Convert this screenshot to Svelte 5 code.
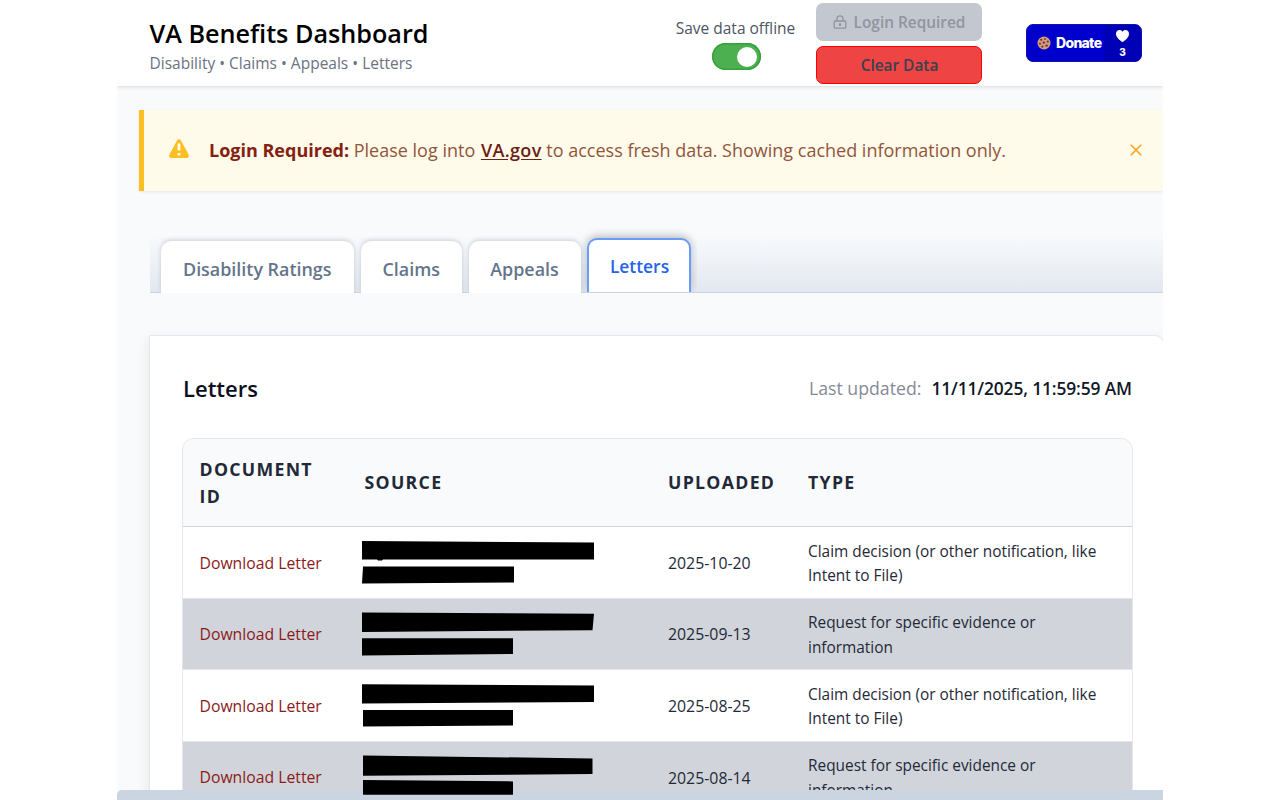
<script>
  const tabs = ["Disability Ratings", "Claims", "Appeals", "Letters"];
  let activeTab = "Letters";
  let saveOffline = true;
  let showNotice = true;

  // bars: redaction shapes covering the source text, in row coordinates
  const letters = [
    {
      uploaded: "2025-10-20",
      type: ["Claim decision (or other notification, like", "Intent to File)"],
      bars: [
        "0,14 232,15.4 232,32.5 21,32.5 20,33.6 16,33.6 15,32.5 0,32.5",
        "1,39.4 152,39.4 152,55.4 0,56.6",
      ],
    },
    {
      uploaded: "2025-09-13",
      type: ["Request for specific evidence or", "information"],
      bars: ["0,13.6 232,14.8 230.5,31.2 0,33", "0,39.2 151,39.2 151,55 0,56.4"],
    },
    {
      uploaded: "2025-08-25",
      type: ["Claim decision (or other notification, like", "Intent to File)"],
      bars: ["0,14.2 232,15.6 232,32 0,33.6", "1,40 151,40 151,55.4 1,56.6"],
    },
    {
      uploaded: "2025-08-14",
      type: ["Request for specific evidence or", "information"],
      bars: ["1,13.6 230.5,16.4 230.5,32 1,33.8", "1,38 151,39.4 151,52.8 1,52.8"],
    },
  ];
</script>

<div class="app">
  <header class="topbar">
    <div class="brand">
      <h1>VA Benefits Dashboard</h1>
      <p>Disability • Claims • Appeals • Letters</p>
    </div>
    <div class="offline">
      <span>Save data offline</span>
      <button
        class="toggle"
        class:on={saveOffline}
        aria-label="Save data offline"
        on:click={() => (saveOffline = !saveOffline)}
      ><i></i></button>
    </div>
    <div class="actions">
      <button class="btn locked" disabled>
        <svg width="14" height="15" viewBox="0 0 14 15" fill="none" stroke="currentColor" stroke-width="1.3">
          <rect x="1.2" y="6" width="11.6" height="7.2" rx="1" />
          <path d="M4 6V3.9a3 3 0 0 1 6 0V6" />
          <circle cx="7" cy="9.6" r="0.7" fill="currentColor" />
        </svg>
        <span>Login Required</span>
      </button>
      <button class="btn clear"><span>Clear Data</span></button>
    </div>
    <button class="donate">
      <span class="donate-main">
        <svg width="14" height="14" viewBox="0 0 14 14">
          <circle cx="7" cy="7" r="6.5" fill="#d99a78" />
          <g fill="#5f3340">
            <circle cx="4.2" cy="3.8" r="1.1" />
            <circle cx="8" cy="3" r="0.9" />
            <circle cx="10.8" cy="5.6" r="1.1" />
            <circle cx="6.8" cy="6.6" r="1.2" />
            <circle cx="3" cy="7.8" r="1" />
            <circle cx="5.4" cy="10.6" r="1.1" />
            <circle cx="9.6" cy="9.6" r="1.2" />
          </g>
        </svg>
        <span class="donate-label">Donate</span>
      </span>
      <span class="donate-count">
        <svg width="13" height="12" viewBox="0 0 13 12">
          <path d="M6.5 12C3.8 10.4 0 7.4 0 3.7 0 1.5 1.6 0 3.5 0c1.3 0 2.4.7 3 1.7C7.1.7 8.2 0 9.5 0 11.4 0 13 1.5 13 3.7c0 3.7-3.8 6.7-6.5 8.3z" fill="#fff" />
        </svg>
        <b>3</b>
      </span>
    </button>
  </header>

  {#if showNotice}
    <div class="notice">
      <svg class="warn" width="22" height="20" viewBox="0 0 22 20">
        <path d="M9 1.4a2.3 2.3 0 0 1 4 0l7.6 14.2a2.2 2.2 0 0 1-2 3.4H3.4a2.2 2.2 0 0 1-2-3.400z" fill="#fbbf24" />
        <path d="M9.6 4.6h2.8v7H9.6zM9.6 14h2.8v2.6H9.6z" fill="#fffbeb" />
      </svg>
      <p><strong>Login Required:</strong> Please log into <a href="#va">VA.gov</a> to access fresh data. Showing cached information only.</p>
      <button class="close" aria-label="Dismiss" on:click={() => (showNotice = false)}>
        <svg width="12" height="12" viewBox="0 0 12 12" stroke="#f9a01b" stroke-width="1.5" fill="none">
          <path d="M.8.8l10.4 10.4M11.2.8L.8 11.2" />
        </svg>
      </button>
    </div>
  {/if}

  <nav class="tabs">
    {#each tabs as tab}
      <button class="tab" class:active={activeTab === tab} on:click={() => (activeTab = tab)}>
        <span>{tab}</span>
      </button>
    {/each}
  </nav>

  <section class="card">
    <div class="card-head">
      <h2>Letters</h2>
      <div class="updated">
        <span class="updated-label">Last updated:</span>
        <span class="updated-value">11/11/2025, 11:59:59 AM</span>
      </div>
    </div>

    <div class="table">
      <div class="row head">
        <div>Document<br />ID</div>
        <div>Source</div>
        <div>Uploaded</div>
        <div>Type</div>
      </div>
      {#each letters as letter}
        <div class="row">
          <div><a class="download" href="#letter">Download Letter</a></div>
          <div class="source">
            <svg width="232" height="71" viewBox="0 0 232 71">
              {#each letter.bars as points}
                <polygon {points} />
              {/each}
            </svg>
          </div>
          <div class="date">{letter.uploaded}</div>
          <div class="type">{letter.type[0]}<br />{letter.type[1]}</div>
        </div>
      {/each}
    </div>
  </section>

  <div class="scrollbar"></div>
</div>

<style>
  :global(body) {
    background: #fff;
    overflow: hidden;
  }
  .app {
    position: relative;
    width: 1046px;
    height: 800px;
    margin-left: 117px;
    overflow: hidden;
    background: #f9fafc;
    font-family: "Open Sans", "Noto Sans", sans-serif;
    color: #1f2937;
  }
  h1,
  h2,
  p {
    margin: 0;
  }
  button {
    font-family: inherit;
    border: 0;
    padding: 0;
    cursor: pointer;
  }
  svg {
    display: block;
    flex: none;
  }
  .topbar {
    display: flex;
    height: 86px;
    background: #fff;
    border-bottom: 1px solid #e5e7eb;
    box-shadow: 0 1px 3px rgba(0, 0, 0, 0.08);
  }
  .brand {
    width: 526px;
    padding: 15px 0 0 32.5px;
    box-sizing: border-box;
    white-space: nowrap;
  }
  h1 {
    font-size: 25.2px;
    line-height: 37px;
    font-weight: 600;
    color: #000;
  }
  .brand p {
    font-size: 15.5px;
    line-height: 22px;
    color: #6b7280;
  }
  .offline {
    width: 186px;
    display: flex;
    flex-direction: column;
    align-items: center;
    padding-top: 17px;
    font-size: 15.5px;
    line-height: 22px;
    color: #4b5563;
    white-space: nowrap;
  }
  .offline span {
    margin-left: -1px;
  }
  .toggle {
    width: 49px;
    height: 27px;
    margin-top: 4px;
    border-radius: 14px;
    background: #ccc;
    display: flex;
    align-items: center;
    padding: 0 4px;
  }
  .toggle.on {
    background: #4caf50;
    justify-content: flex-end;
    box-shadow: inset 0 0 0 1.5px #38a03c;
  }
  .toggle i {
    width: 20px;
    height: 20px;
    border-radius: 50%;
    background: #fff;
  }
  .actions {
    width: 166px;
    margin-left: -13px;
    padding-top: 3px;
    display: flex;
    flex-direction: column;
    gap: 5px;
  }
  .btn {
    height: 38px;
    border-radius: 7px;
    display: flex;
    align-items: center;
    justify-content: center;
    gap: 7px;
    font-size: 15.4px;
    font-weight: 600;
  }
  .btn.locked {
    background: #c3c7cf;
    color: #90959f;
  }
  .btn.clear {
    background: #ef4444;
    border: 1px solid #f00;
    color: #374151;
    padding: 1px 0 0 1px;
  }
  .donate {
    display: flex;
    width: 116px;
    height: 38px;
    margin: 24px 0 0 44px;
    border-radius: 7px;
    overflow: hidden;
    background: #0000cd;
    color: #fff;
    border: 1px solid #1212a8;
  }
  .donate-main {
    width: 77px;
    height: 100%;
    display: flex;
    align-items: center;
    gap: 5px;
    padding-left: 10px;
    box-sizing: border-box;
  }
  .donate-label {
    font-family: Inter, sans-serif;
    font-size: 14px;
    line-height: 16px;
    font-weight: 800;
    letter-spacing: -0.7px;
  }
  .donate-count {
    flex: 1;
    height: 100%;
    background: #0000b4;
    display: flex;
    flex-direction: column;
    align-items: center;
    gap: 4px;
    padding-top: 5px;
    box-sizing: border-box;
  }
  .donate-count b {
    font: 800 10px/12px Inter, sans-serif;
  }
  .notice {
    display: flex;
    align-items: center;
    height: 81px;
    margin: 23px 0 0 22px;
    padding: 0 21px 1px 24px;
    box-sizing: border-box;
    border-left: 5px solid #fbbf24;
    background: #fffbeb;
    box-shadow: 0 1px 3px rgba(0, 0, 0, 0.08);
  }
  .warn {
    margin-top: -2px;
  }
  .notice p {
    flex: 1;
    margin-left: 19px;
    font-size: 18px;
    line-height: 24px;
    margin-top: -1px;
    color: #92553a;
    white-space: nowrap;
  }
  .notice strong {
    font-weight: 700;
    color: #86200f;
  }
  .notice a {
    color: #6b2012;
    font-weight: 600;
    letter-spacing: 0.35px;
    margin-left: 1px;
    text-underline-offset: 2px;
  }
  .close {
    background: none;
  }
  .tabs {
    display: flex;
    align-items: flex-end;
    gap: 6.5px;
    height: 58px;
    margin: 44px 0 0 32.5px;
    padding-left: 11px;
    box-sizing: border-box;
    border-bottom: 1px solid #cbd5e1;
    background: linear-gradient(#f8fafc, #e2e8f0);
  }
  .tab {
    height: 52px;
    width: 193.5px;
    margin-bottom: -1px;
    border-radius: 10px 10px 0 0;
    background: #fff;
    box-shadow: 0 -1px 4px rgba(71, 85, 105, 0.25);
    clip-path: inset(-10px -6px 0);
    font-size: 17.9px;
    font-weight: 600;
    color: #64748b;
    white-space: nowrap;
    padding-top: 4px;
  }
  .tab:nth-child(2) {
    width: 101.5px;
  }
  .tab:nth-child(3) {
    width: 112px;
  }
  .tab.active {
    width: 104px;
    height: 54px;
    margin-bottom: 0;
    padding: 0 0 1px 1px;
    border: 2px solid #6b9bf8;
    border-bottom: 0;
    font-size: 17.4px;
    color: #2563eb;
    box-shadow: 0 -2px 8px rgba(0, 0, 0, 0.25);
  }
  .card {
    height: 520px;
    margin: 42px -1px 0 32px;
    padding: 0 32px;
    border: 1px solid #e2e8f0;
    border-radius: 0 9px 0 0;
    background: #fff;
    box-shadow: 0 5px 14px rgba(0, 0, 0, 0.09);
  }
  .card-head {
    display: flex;
    align-items: center;
    justify-content: space-between;
    height: 102px;
    padding: 1px 0 0 1px;
    box-sizing: border-box;
    white-space: nowrap;
  }
  h2 {
    font-size: 22px;
    font-weight: 600;
    color: #0b1020;
  }
  .updated {
    display: flex;
    gap: 10px;
    font-size: 17.7px;
    margin-right: -1px;
  }
  .updated-label {
    color: #858b96;
  }
  .updated-value {
    color: #111827;
    font-size: 17.4px;
    font-weight: 600;
    letter-spacing: -0.13px;
  }
  .table {
    width: 949px;
    border: 1px solid #e5e7eb;
    border-radius: 12px 12px 0 0;
  }
  .row {
    display: grid;
    grid-template-columns: 165px 303.5px 140px 340.5px;
    align-items: center;
    height: 71.67px;
    border-bottom: 1px solid #e5e7eb;
    box-sizing: border-box;
    background: #fff;
    white-space: nowrap;
  }
  .row:nth-child(odd):not(.head) {
    background: #d1d5db;
  }
  .row > div {
    padding-left: 16.5px;
  }
  .row.head {
    height: 88px;
    border-radius: 12px 12px 0 0;
    border-bottom: 1px solid #d1d5db;
    background: #f9fafb;
    font-size: 17.7px;
    line-height: 27px;
    font-weight: 700;
    letter-spacing: 1.3px;
    text-transform: uppercase;
  }
  .download {
    font-size: 15.75px;
    color: #8b1a1a;
    text-decoration: none;
  }
  .row > .source {
    position: relative;
    z-index: 2;
    padding-left: 14px;
  }
  .row > .date,
  .row > .type {
    font-size: 15.4px;
    line-height: 24.5px;
    padding-top: 3px;
  }
  .row > .date {
    font-size: 15.85px;
    padding-top: 1px;
  }
  .scrollbar {
    position: absolute;
    left: 0;
    right: 0;
    bottom: 0;
    height: 10px;
    z-index: 1;
    border-top-left-radius: 5px;
    background: #cbd5e1;
  }
</style>
